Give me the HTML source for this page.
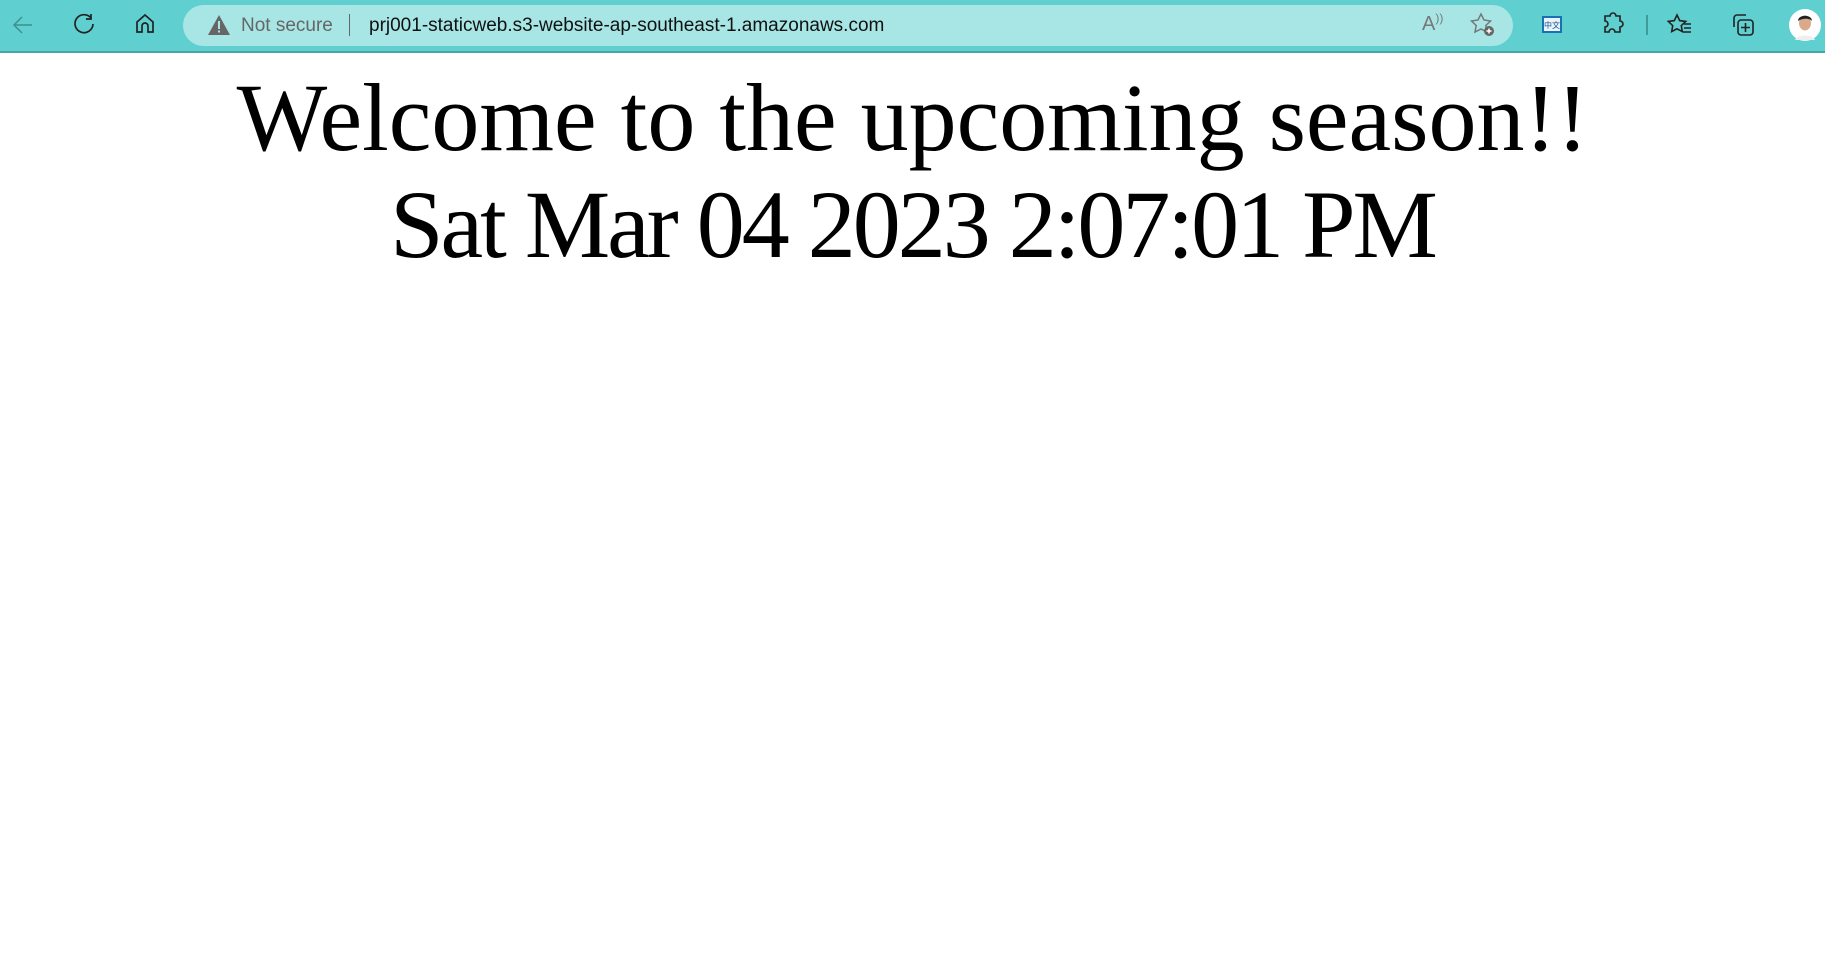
<!DOCTYPE html>
<html><head><meta charset="utf-8"><style>
html,body{margin:0;padding:0;width:1825px;height:967px;overflow:hidden;background:#fff}
.tb{position:absolute;left:0;top:0;width:1825px;height:51px;background:#5fcfcf;border-bottom:2px solid #48a6a6}
.addr{position:absolute;left:183px;top:5px;width:1330px;height:41px;border-radius:21px;background:#a8e6e6}
.t{position:absolute;font-family:"Liberation Sans",sans-serif;font-size:19px;top:15px;white-space:nowrap}
svg{position:absolute}
.h{position:absolute;left:0;width:1825px;text-align:center;font-family:"Liberation Serif",serif;font-size:96px;line-height:107px;color:#000;white-space:nowrap}
</style></head><body>
<div class="tb"></div>
<div class="addr"></div>
<svg style="left:11px;top:13px" width="24" height="24" viewBox="0 0 24 24" fill="none" stroke="#3f8f8f" stroke-width="1.5"><path d="M21 12H3M11 4l-8 8 8 8"/></svg>
<svg style="left:72px;top:12px" width="24" height="24" viewBox="0 0 24 24" fill="none" stroke="#222" stroke-width="1.7"><path d="M19 6A9 9 0 1 0 21 12"/><path d="M19 2v5h-5"/></svg>
<svg style="left:133px;top:12px" width="24" height="24" viewBox="0 0 24 24" fill="none" stroke="#222" stroke-width="1.7"><path d="M4 10l8-7 8 7v10h-5v-6a3 3 0 0 0-6 0v6H4z"/></svg>
<svg style="left:207px;top:14px" width="24" height="22" viewBox="0 0 24 22"><path d="M12 1L23 21H1z" fill="#666"/><rect x="11" y="7" width="2" height="8" fill="#a8e6e6"/><rect x="11" y="16.5" width="2" height="2" fill="#a8e6e6"/></svg>
<div class="t" style="left:241px;color:#666">Not secure</div>
<div style="position:absolute;left:349px;top:14px;width:1px;height:22px;background:#666"></div>
<div class="t" style="left:369px;color:#111">prj001-staticweb.s3-website-ap-southeast-1.amazonaws.com</div>
<div class="t" style="left:1422px;top:13px;color:#777;font-size:20px">A<span style="font-size:12px;position:relative;top:-8px">))</span></div>
<svg style="left:1470px;top:12px" width="26" height="26" viewBox="0 0 26 26" fill="none" stroke="#777" stroke-width="1.5"><path d="M11 2l3 6 6.5 1-4.7 4.5 1 6.5L11 17l-6 3 1.2-6.5L1.5 9 8 8z"/><circle cx="19" cy="19" r="5" fill="#666" stroke="none"/><path d="M19 16.5v5M16.5 19h5" stroke="#fff"/></svg>
<svg style="left:1540px;top:13px" width="24" height="24" viewBox="0 0 24 24"><rect x="2" y="3" width="20" height="17" fill="#1a6fb5"/><rect x="4" y="5" width="16" height="13" fill="#e8f4ff"/><text x="12" y="15" font-size="8" text-anchor="middle" fill="#1a4f85" font-family="Noto Sans CJK SC,sans-serif">中文</text></svg>
<svg style="left:1601px;top:12px" width="24" height="24" viewBox="0 0 24 24" fill="none" stroke="#222" stroke-width="1.6"><path d="M9 4a3 3 0 0 1 6 0h4v5a3 3 0 0 1 0 6v5h-5a3 3 0 0 0-6 0H4v-5a3 3 0 0 0 0-6V4z"/></svg>
<div style="position:absolute;left:1646px;top:15px;width:2px;height:20px;background:#3f9a9a"></div>
<svg style="left:1667px;top:13px" width="26" height="24" viewBox="0 0 26 24" fill="none" stroke="#222" stroke-width="1.6"><path d="M10 2l2.7 5.6 6 .8-4.4 4.2 1 6L10 15.8 4.7 18.6l1-6L1.3 8.4l6-.8z"/><path d="M17 11h7M17 15h7M16 19h8"/></svg>
<svg style="left:1730px;top:12px" width="26" height="26" viewBox="0 0 26 26" fill="none" stroke="#222" stroke-width="1.6"><path d="M4 15V6a3 3 0 0 1 3-3h9"/><rect x="8" y="8" width="15" height="15" rx="3"/><path d="M15.5 11v9M11 15.5h9"/></svg>
<svg style="left:1788px;top:8px" width="34" height="34" viewBox="0 0 34 34"><circle cx="17" cy="17" r="16" fill="#fff"/><ellipse cx="17" cy="15" rx="6" ry="7.5" fill="#d9a98a"/><path d="M10 13c0-7 14-7 14 0-2-3-10-3-14 0z" fill="#222"/><path d="M7 32c2-6 18-6 20 0z" fill="#eee"/></svg>
<div class="h" style="top:64px">Welcome to the upcoming season!!</div>
<div class="h" style="top:171px;letter-spacing:-3px">Sat Mar 04 2023 2:07:01 PM</div>
</body></html>
